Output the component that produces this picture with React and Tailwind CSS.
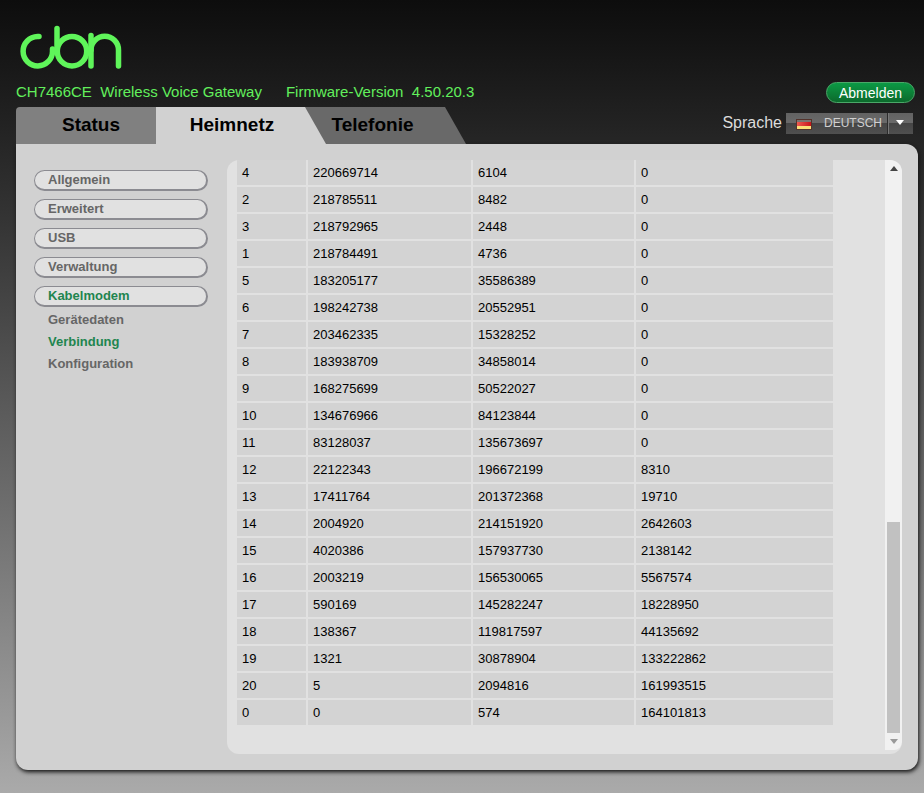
import { useState } from 'react';

const tabs = [
  { label: 'Status', className: 'z-10 w-[140px] rounded-tl bg-[#808080] pl-2.5' },
  {
    label: 'Heimnetz',
    className:
      'z-20 w-[170px] bg-[#d1d1d1] pr-[18px] [clip-path:polygon(0_0,149px_0,100%_100%,0_100%)]',
  },
  {
    label: 'Telefonie',
    className:
      '-ml-[21px] w-[161px] bg-[#696969] pr-[26px] [clip-path:polygon(0_0,140px_0,100%_100%,0_100%)]',
  },
];

const menu = ['Allgemein', 'Erweitert', 'USB', 'Verwaltung', 'Kabelmodem'];
const submenu = ['Gerätedaten', 'Verbindung', 'Konfiguration'];

// channel, unerrored, corrected, uncorrectable
const rows = [
  [4, 220669714, 6104, 0],
  [2, 218785511, 8482, 0],
  [3, 218792965, 2448, 0],
  [1, 218784491, 4736, 0],
  [5, 183205177, 35586389, 0],
  [6, 198242738, 20552951, 0],
  [7, 203462335, 15328252, 0],
  [8, 183938709, 34858014, 0],
  [9, 168275699, 50522027, 0],
  [10, 134676966, 84123844, 0],
  [11, 83128037, 135673697, 0],
  [12, 22122343, 196672199, 8310],
  [13, 17411764, 201372368, 19710],
  [14, 2004920, 214151920, 2642603],
  [15, 4020386, 157937730, 2138142],
  [16, 2003219, 156530065, 5567574],
  [17, 590169, 145282247, 18228950],
  [18, 138367, 119817597, 44135692],
  [19, 1321, 30878904, 133222862],
  [20, 5, 2094816, 161993515],
  [0, 0, 574, 164101813],
];

function Logo() {
  return (
    <svg width="104" height="46" viewBox="0 0 104 46" fill="none" stroke="#5ff55a" strokeWidth="5.5" strokeLinecap="round" role="img" aria-label="cbn">
      <path d="M19 12.500H17.500A14.700 14.700 0 1 0 32.500 27.200V25" />
      <path d="M37 4.500V27" />
      <circle cx="52" cy="27.200" r="14.700" />
      <path d="M71 11.500V42" />
      <path d="M71 26A13.600 13.600 0 0 1 98.500 26V42" />
    </svg>
  );
}

function LanguageSelect() {
  return (
    <div className="flex items-center gap-1">
      <label htmlFor="language" className="text-base text-[#dcdcdc]">Sprache</label>
      <div className="relative">
        <select
          id="language"
          className="block h-[21px] w-[127px] appearance-none bg-[linear-gradient(#626262,#6a6a6a_45%,#454545_50%,#505050)] pl-[38px] text-[12px] leading-5 text-[#d0d0d0] outline-none"
        >
          <option>DEUTSCH</option>
          <option>ENGLISH</option>
        </select>
        <svg className="pointer-events-none absolute top-1.5 left-2.5" width="16" height="11" viewBox="0 0 16 11">
          <defs>
            <linearGradient id="red" x1="0" x2="1" y1="0" y2="0">
              <stop offset="0" stopColor="#ef5a50" />
              <stop offset="1" stopColor="#c8141a" />
            </linearGradient>
          </defs>
          <rect width="16" height="11" fill="#54332c" />
          <rect x="1" y="1" width="14" height="3" fill="#7c7470" />
          <rect x="1" y="3" width="14" height="4" fill="url(#red)" />
          <rect x="1" y="7" width="14" height="3" fill="#fbdf78" />
        </svg>
        <svg className="pointer-events-none absolute top-0 right-0" width="26" height="21" viewBox="0 0 26 21">
          <path d="M0.500 0V21" stroke="#2c2c2c" />
          <path d="M1.500 0V21" stroke="#777" />
          <path d="M9 7H17L13 12Z" fill="#fff" />
        </svg>
      </div>
    </div>
  );
}

function Sidebar({ active, onSelect }) {
  return (
    <nav className="w-[174px] shrink-0 pt-2.5 text-[13px] font-bold text-[#666]">
      <ul className="space-y-2">
        {menu.map((item) => (
          <li key={item}>
            <button
              className={`block h-[21px] w-full rounded-full border border-r-2 border-b-2 border-[#8b8b91] bg-[#e1e1e1] pl-[13px] text-left leading-4 ${item === 'Kabelmodem' ? 'text-[#1f854f]' : ''}`}
            >
              {item}
            </button>
          </li>
        ))}
      </ul>
      <ul className="pt-0.5 pl-3.5">
        {submenu.map((item) => (
          <li key={item}>
            <button
              onClick={() => onSelect(item)}
              className={`block leading-[22px] ${item === active ? 'text-[#1f854f]' : ''}`}
            >
              {item}
            </button>
          </li>
        ))}
      </ul>
    </nav>
  );
}

function Scrollbar() {
  return (
    <div className="mb-1 flex w-[17px] shrink-0 flex-col rounded-br-lg bg-[#f1f1f1]">
      <button aria-label="Nach oben" className="flex h-[17px] items-center justify-center">
        <svg width="8" height="5" viewBox="0 0 8 5"><path d="M0 5L4 0L8 5Z" fill="#444" /></svg>
      </button>
      <div className="flex flex-1 flex-col justify-end px-0.5">
        <div className="h-[38%] bg-[#c1c1c1]" />
      </div>
      <button aria-label="Nach unten" className="flex h-[17px] items-center justify-center">
        <svg width="8" height="5" viewBox="0 0 8 5"><path d="M0 0L4 5L8 0Z" fill="#999" /></svg>
      </button>
    </div>
  );
}

export default function App() {
  const [page, setPage] = useState('Verbindung');

  return (
    <div className="min-h-screen bg-linear-to-b from-[#0d0d0d] via-[#585858] to-[#aaa] pr-1.5 pb-[23px] pl-4 font-['Liberation_Sans',Arial,sans-serif]">
      <header className="flex h-[144px] items-end justify-between">
        <div>
          <div className="pl-1">
            <Logo />
          </div>
          <p className="flex gap-6 pt-3 pb-[5px] text-[15px] leading-5 whitespace-pre text-[#62f05c]">
            <span>CH7466CE  Wireless Voice Gateway</span>
            <span>Firmware-Version  4.50.20.3</span>
          </p>
          <div className="flex">
            {tabs.map((tab) => (
              <button key={tab.label} className={`relative h-[37px] pb-0.5 text-[19px] leading-6 font-bold text-black ${tab.className}`}>
                {tab.label}
              </button>
            ))}
          </div>
        </div>
        <div className="flex flex-col items-end gap-2 pr-[5px] pb-[9px]">
          <button className="-mr-0.5 h-[21px] rounded-full border border-[#4aa868] bg-linear-to-b from-[#0b9a45] to-[#0c6a2c] px-3 text-sm leading-4 text-white">
            Abmelden
          </button>
          <LanguageSelect />
        </div>
      </header>

      <main className="flex gap-[19px] rounded-xl rounded-tl-none bg-[#d1d1d1] px-4 py-4 pl-[18px] shadow-[1px_2px_4px_0px_#111]">
        <Sidebar active={page} onSelect={setPage} />
        <section className="flex flex-1 overflow-hidden rounded-xl bg-[#e1e1e1]">
          <div className="flex-1 pr-[52px] pb-[29px] pl-2.5">
            <table className="w-full table-fixed text-[13px] leading-[25px] text-black">
              <colgroup>
                <col className="w-[70px]" />
                <col className="w-[165px]" />
                <col className="w-[163px]" />
                <col />
              </colgroup>
              <tbody>
                {rows.map((row) => (
                  <tr key={row[0]} className="border-b-2 border-[#e1e1e1] bg-[#d3d3d3] last:border-b-0">
                    {row.map((value, i) => (
                      <td key={i} className="border-r-2 border-[#e1e1e1] p-0 pl-[5px] last:border-r-0">
                        {value}
                      </td>
                    ))}
                  </tr>
                ))}
              </tbody>
            </table>
          </div>
          <Scrollbar />
        </section>
      </main>
    </div>
  );
}
